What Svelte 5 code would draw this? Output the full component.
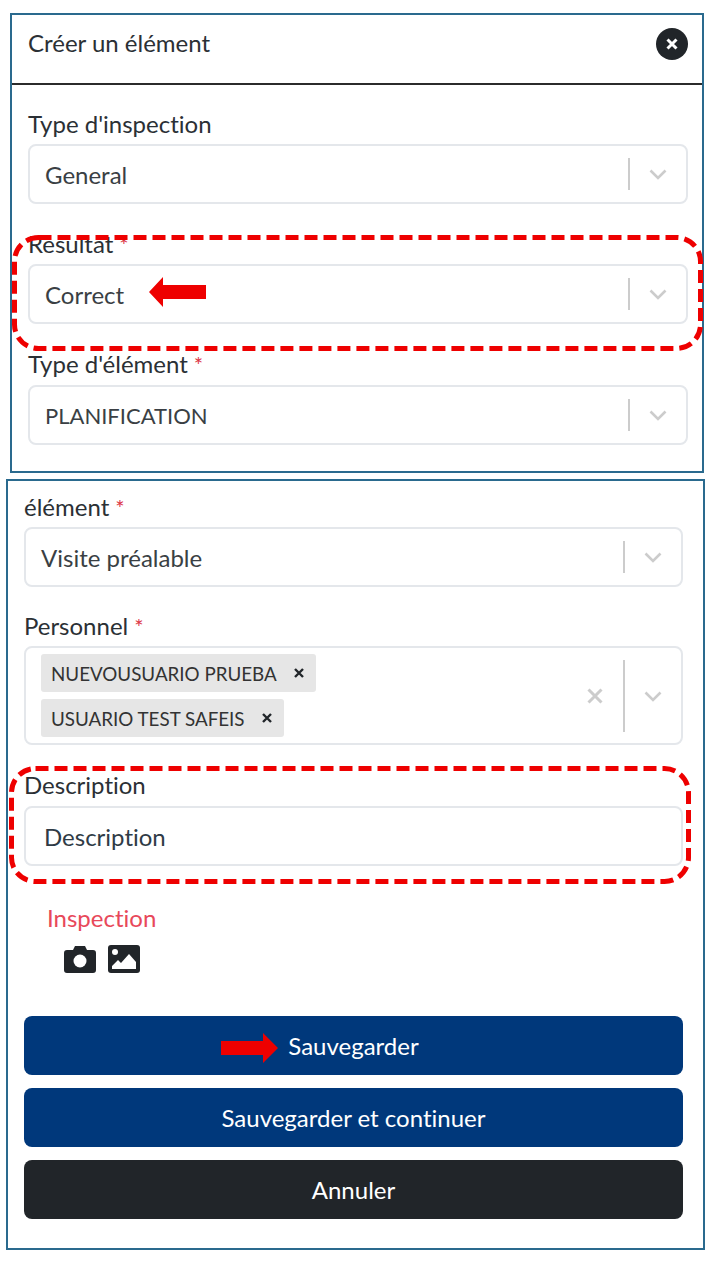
<script>
  // champs de la première carte
  const topFields = [
    { label: "Type d'inspection", value: 'General', required: false },
    { label: 'Resultat', value: 'Correct', required: true, marked: true },
    { label: "Type d'élément", value: 'PLANIFICATION', required: true, caps: true }
  ];
  const people = ['NUEVOUSUARIO PRUEBA', 'USUARIO TEST SAFEIS'];
</script>

{#snippet chevron()}
  <svg class="chevron" viewBox="0 0 20 20" width="20" height="20">
    <path d="M2.5 6.5 L10 14 L17.5 6.5" fill="none" stroke="#ccc" stroke-width="2.6" />
  </svg>
{/snippet}

{#snippet selectBox(value, caps)}
  <div class="control">
    <span class="value" class:caps>{value}</span>
    <span class="sep"></span>
    {@render chevron()}
  </div>
{/snippet}

<div class="page">
  <section class="card first">
    <header class="head">
      <h2>Créer un élément</h2>
      <button class="close" aria-label="Fermer">
        <svg viewBox="0 0 14 14" width="14" height="14">
          <path d="M2.5 2.5 L11.5 11.5 M11.5 2.5 L2.5 11.5" stroke="#fff" stroke-width="3" />
        </svg>
      </button>
    </header>
    <div class="body">
      {#each topFields as f}
        <div class="field">
          <label>{f.label}{#if f.required}<span class="req">*</span>{/if}</label>
          {@render selectBox(f.value, f.caps)}
          {#if f.marked}
            <svg class="dash dash-a" viewBox="0 0 691 116" width="691" height="116">
              <rect x="2.5" y="2.5" width="686" height="111" rx="24" />
            </svg>
            <svg class="arrow arrow-left" viewBox="0 0 57 30" width="57" height="30">
              <path d="M0 15 L14 0 L14 8 L57 8 L57 22 L14 22 L14 30 Z" fill="#ee0000" />
            </svg>
          {/if}
        </div>
      {/each}
    </div>
  </section>

  <section class="card second">
    <div class="field">
      <label>élément<span class="req">*</span></label>
      {@render selectBox('Visite préalable', false)}
    </div>

    <div class="field">
      <label>Personnel<span class="req">*</span></label>
      <div class="control multi">
        <div class="tags">
          {#each people as p}
            <span class="tag">{p}
              <svg viewBox="0 0 10 10" width="10" height="10">
                <path d="M1 1 L9 9 M9 1 L1 9" stroke="#212529" stroke-width="2.4" />
              </svg>
            </span>
          {/each}
        </div>
        <svg class="clear" viewBox="0 0 16 16" width="16" height="16">
          <path d="M1.5 1.5 L14.5 14.5 M14.5 1.5 L1.5 14.5" stroke="#ccc" stroke-width="3" />
        </svg>
        <span class="sep tall"></span>
        {@render chevron()}
      </div>
    </div>

    <div class="field desc">
      <label>Description</label>
      <div class="control text"><span class="placeholder">Description</span></div>
      <svg class="dash dash-b" viewBox="0 0 682 118" width="682" height="118">
        <rect x="2.5" y="2.5" width="677" height="113" rx="24" />
      </svg>
    </div>

    <div class="attach">
      <div class="attach-title">Inspection</div>
      <div class="icons">
        <svg viewBox="0 0 32 28" width="32" height="28">
          <path fill="#212529" d="M3 5 H9 L11 1 H21 L23 5 H29 Q32 5 32 8 V25 Q32 28 29 28 H3 Q0 28 0 25 V8 Q0 5 3 5 Z" />
          <circle cx="16" cy="16" r="6.5" fill="#fff" />
        </svg>
        <svg viewBox="0 0 32 28" width="32" height="28">
          <rect width="32" height="28" rx="3" fill="#212529" />
          <circle cx="7" cy="7" r="3" fill="#fff" />
          <path fill="#fff" d="M4 24 V21 L10 15 L13 18 L21 9 L28 17 V24 Z" />
        </svg>
      </div>
    </div>

    <div class="actions">
      <button class="btn primary">
        <svg class="arrow arrow-right" viewBox="0 0 57 30" width="57" height="30">
          <path d="M57 15 L42 0 L42 8 L0 8 L0 22 L42 22 L42 30 Z" fill="#ee0000" />
        </svg>
        Sauvegarder
      </button>
      <button class="btn primary">Sauvegarder et continuer</button>
      <button class="btn dark">Annuler</button>
    </div>
  </section>
</div>

<style>
  :global(body) {
    margin: 0;
    background: #fff;
  }

  .page {
    width: 717px;
    height: 1265px;
    padding-top: 13px;
    box-sizing: border-box;
    font-family: Lato, "Liberation Sans", sans-serif;
    font-size: 24px;
    font-variant-ligatures: none;
    color: #2b3035;
    overflow: hidden;
  }

  .card {
    border: 2px solid #2a6a8e;
    box-sizing: border-box;
    background: #fff;
  }

  .first {
    margin-left: 10px;
    width: 694px;
    height: 460px;
  }

  .second {
    margin-left: 6px;
    margin-top: 6px;
    width: 699px;
    height: 771px;
    padding: 0 20px 0 16px;
  }

  .head {
    height: 70px;
    box-sizing: border-box;
    border-bottom: 2px solid #2b2b2b;
    display: flex;
    justify-content: space-between;
    align-items: flex-start;
    padding: 13px 14px 0 16px;
  }

  h2 {
    margin: 0;
    font-size: 24px;
    font-weight: 400;
    line-height: 30px;
  }

  .close {
    width: 32px;
    height: 32px;
    padding: 0;
    border: none;
    border-radius: 50%;
    background: #212529;
    display: flex;
    align-items: center;
    justify-content: center;
  }

  .body {
    padding: 23px 14px 0 16px;
  }

  .field {
    position: relative;
    margin-bottom: 24px;
  }

  label {
    display: block;
    height: 36px;
    line-height: 32px;
  }

  .body .field:last-child label {
    height: 37px;
  }

  .second .field {
    margin-bottom: 23px;
  }

  .second .field:first-child {
    padding-top: 10px;
  }

  .req {
    color: #dc3545;
    margin-left: 6px;
    font-size: 22px;
  }

  .control {
    height: 60px;
    box-sizing: border-box;
    border: 2px solid #e4e7eb;
    border-radius: 8px;
    display: flex;
    align-items: center;
    padding: 0 18px 0 15px;
    color: #3a3f44;
    background: #fff;
  }

  .value {
    flex: 1;
  }

  .value.caps {
    font-size: 22px;
  }

  .sep {
    width: 2px;
    height: 32px;
    background: #ccc;
    margin-right: 18px;
  }

  .sep.tall {
    height: 72px;
  }

  .multi {
    height: 99px;
  }

  .tags {
    flex: 1;
    display: flex;
    flex-direction: column;
    align-items: flex-start;
    gap: 7px;
  }

  .tag {
    height: 38px;
    box-sizing: border-box;
    background: #e6e6e6;
    border-radius: 3px;
    display: inline-flex;
    align-items: center;
    gap: 17px;
    padding: 0 12px 0 10px;
    font-size: 18.8px;
    color: #333;
  }

  .clear {
    margin-right: 20px;
  }

  .text {
    padding-left: 18px;
  }

  .placeholder {
    color: #2f3b46;
  }

  .desc label {
    height: 38px;
    line-height: 34px;
  }

  .attach {
    padding: 0 0 0 23px;
    margin-top: 37px;
  }

  .attach-title {
    color: #e8485a;
    line-height: 30px;
  }

  .icons {
    display: flex;
    gap: 12px;
    margin: 12px 0 0 17px;
  }

  .actions {
    margin-top: 43px;
    display: flex;
    flex-direction: column;
    gap: 13px;
  }

  .btn {
    position: relative;
    height: 59px;
    border: none;
    border-radius: 8px;
    color: #fff;
    font: inherit;
  }

  .primary {
    background: #00387b;
  }

  .dark {
    background: #212529;
  }

  /* annotations rouges posées sur la capture */
  .dash {
    position: absolute;
    pointer-events: none;
  }

  .dash rect {
    fill: none;
    stroke: #ee0000;
    stroke-width: 5;
    stroke-dasharray: 13 6;
  }

  .dash-a {
    left: -16px;
    top: 7px;
  }

  .dash-b {
    left: -15px;
    top: -2px;
  }

  .arrow {
    position: absolute;
  }

  .arrow-left {
    left: 121px;
    top: 49px;
  }

  .arrow-right {
    left: 197px;
    top: 17px;
  }
</style>
